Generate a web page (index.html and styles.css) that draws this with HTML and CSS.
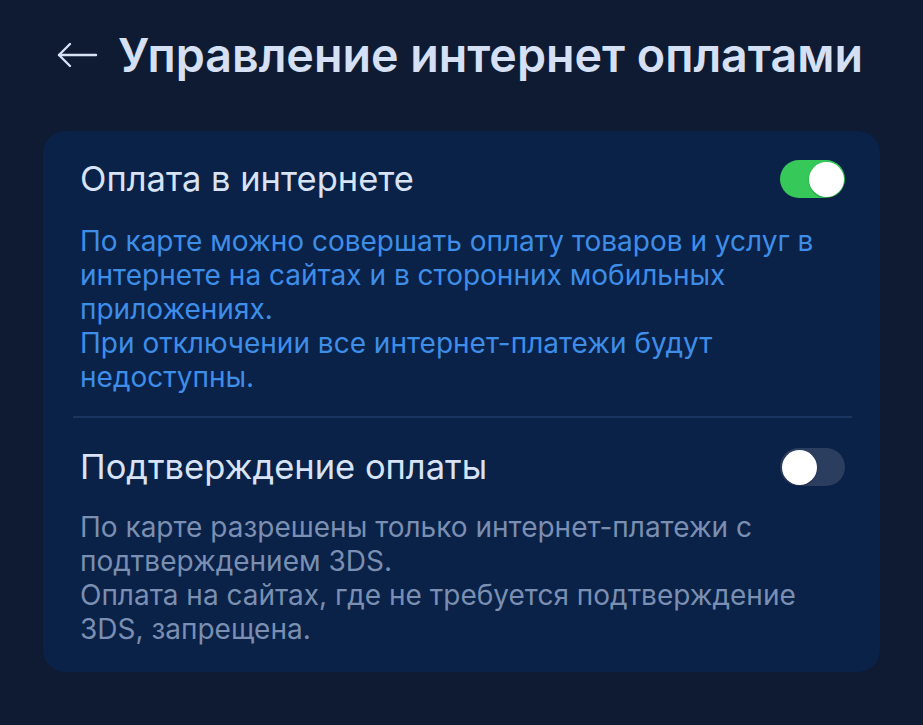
FILE: index.html
```html
<!DOCTYPE html>
<html lang="ru">
<head>
<meta charset="utf-8">
<title>Управление интернет оплатами</title>
<link rel="stylesheet" href="styles.css">
</head>
<body>
<header class="topbar">
  <button class="back" aria-label="Назад">
    <svg width="42" height="26" viewBox="0 0 42 26" fill="none" stroke="currentColor" stroke-width="2.4" stroke-linecap="round" stroke-linejoin="round">
      <path d="M40 13H3"/>
      <path d="M14 2L3 13l11 11"/>
    </svg>
  </button>
  <h1 class="title">Управление интернет оплатами</h1>
</header>

<main class="card">
  <section class="setting">
    <div class="setting-row">
      <span class="setting-label">Оплата в интернете</span>
      <span class="switch switch-on" role="switch" aria-checked="true"><span class="knob"></span></span>
    </div>
    <p class="setting-desc desc-active">По карте можно совершать оплату товаров и услуг в интернете на сайтах и в сторонних мобильных приложениях.<br>При отключении все интернет-платежи будут недоступны.</p>
  </section>

  <hr class="divider">

  <section class="setting">
    <div class="setting-row">
      <span class="setting-label">Подтверждение оплаты</span>
      <span class="switch switch-off" role="switch" aria-checked="false"><span class="knob"></span></span>
    </div>
    <p class="setting-desc desc-muted">По карте разрешены только интернет-платежи с подтверждением 3DS.<br>Оплата на сайтах, где не требуется подтверждение 3DS, запрещена.</p>
  </section>
</main>
</body>
</html>
```
FILE: styles.css
```css
html, body {
  margin: 0;
  padding: 0;
}

body {
  background: #0f1b32;
  font-family: Inter, "Noto Sans", "Liberation Sans", sans-serif;
  color: #d7e2f5;
  width: 923px;
  height: 725px;
  overflow: hidden;
}

.topbar {
  display: flex;
  align-items: center;
  gap: 20px;
  padding: 27px 0 0 56px;
  height: 56px;
}

.back {
  display: flex;
  align-items: center;
  padding: 0;
  border: 0;
  background: none;
  color: #d7e2f5;
}

.title {
  margin: 0;
  font-size: 46.6px;
  font-weight: 600;
  letter-spacing: 0;
  color: #d5e0f4;
  line-height: 56px;
  white-space: nowrap;
}

.card {
  margin: 48px 0 0 43px;
  width: 837px;
  height: 541px;
  box-sizing: border-box;
  background: #0a2148;
  border-radius: 22px;
  padding: 29px 35px 0 37px;
}

.setting-row {
  display: flex;
  align-items: center;
  justify-content: space-between;
  height: 38px;
}

.setting-label {
  font-size: 34.5px;
  font-weight: 400;
  line-height: 38px;
  color: #d8e3f6;
}

.setting-desc {
  margin: 26px 0 0;
  font-size: 28px;
  line-height: 34px;
}

.desc-active {
  color: #3e8ee8;
}

.desc-muted {
  margin-top: 24px;
  color: #7a8fb1;
}

.divider {
  margin: 22px -7px 30px -7px;
  border: 0;
  height: 2px;
  background: #1b3561;
}

.switch {
  position: relative;
  width: 65px;
  height: 38px;
  border-radius: 19px;
  flex: none;
}

.switch-on {
  background: #36c95a;
}

.switch-off {
  background: #2b3e60;
}

.knob {
  position: absolute;
  top: 1.5px;
  width: 35px;
  height: 35px;
  border-radius: 50%;
  background: #ffffff;
  box-shadow: 0 1px 2px rgba(0, 0, 0, 0.25);
}

.switch-on .knob {
  right: 1.5px;
}

.switch-off .knob {
  left: 1.5px;
}
```
